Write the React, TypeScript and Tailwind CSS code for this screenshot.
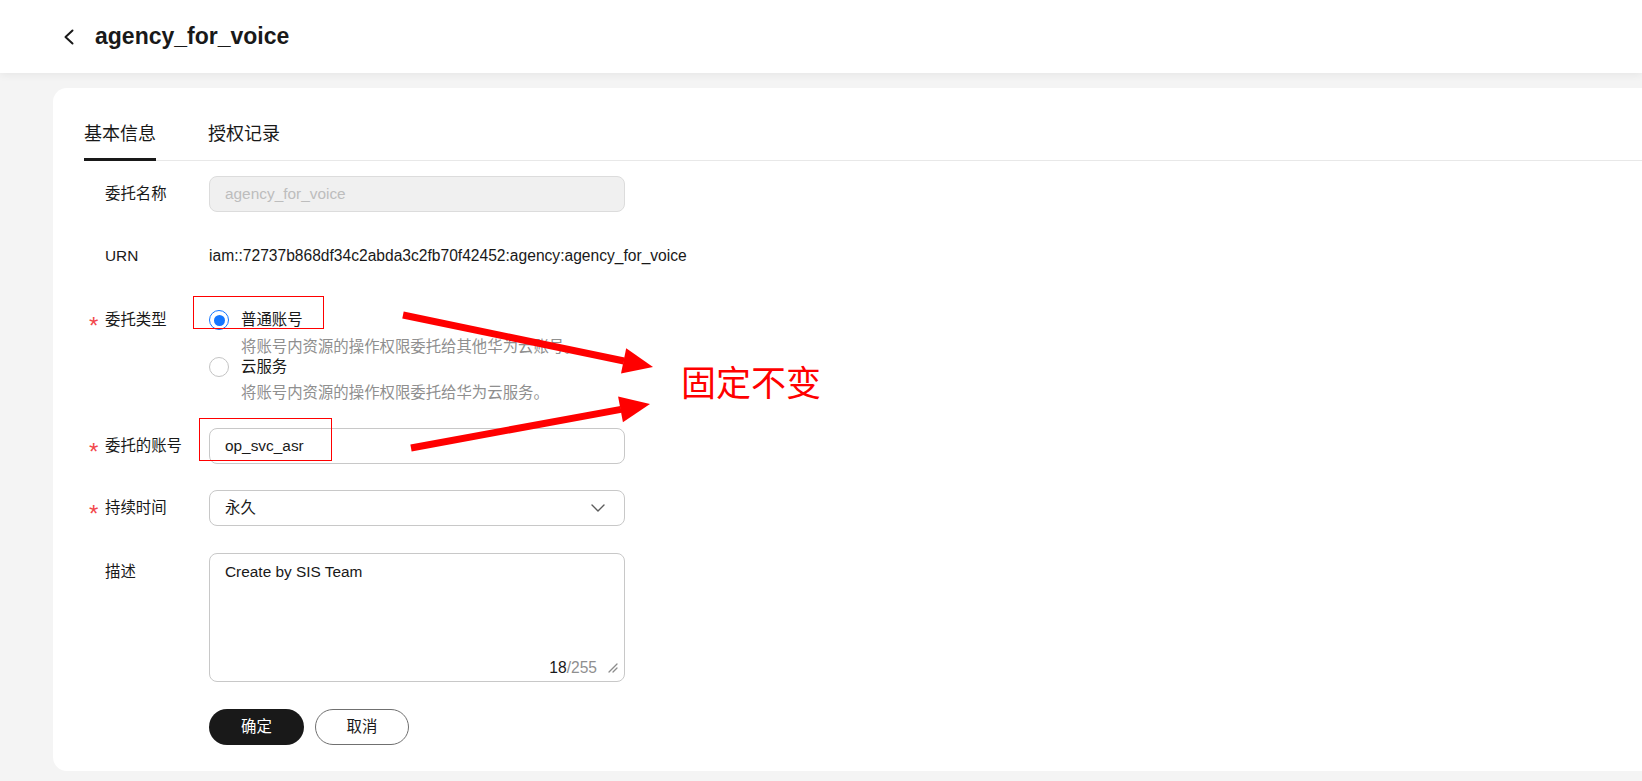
import React from "react";

function Req({ on }: { on?: boolean }) {
  return (
    <span className="relative top-[6px] w-[16px] shrink-0 text-[24px] leading-[20px] text-[#f2474b]">
      {on ? "*" : ""}
    </span>
  );
}

function Label({ text, required, h = "h-[36px]" }: { text: string; required?: boolean; h?: string }) {
  return (
    <div className={`flex w-[156px] shrink-0 items-center pl-[36px] ${h}`}>
      <Req on={required} />
      <span className="text-[15.4px] leading-[20px]">{text}</span>
    </div>
  );
}

function ChevronDown() {
  return (
    <svg width="14" height="8" viewBox="0 0 14 8" fill="none">
      <path d="M1 1 L7 7 L13 1" stroke="#5c5c5c" strokeWidth="1.4" strokeLinecap="round" strokeLinejoin="round" />
    </svg>
  );
}

function ResizeGrip() {
  return (
    <svg width="10" height="10" viewBox="0 0 10 10" fill="none">
      <path d="M1 9 L9 1 M5 9 L9 5" stroke="#8c8c8c" strokeWidth="1.3" strokeLinecap="round" />
    </svg>
  );
}

export default function App() {
  return (
    <div className="relative h-[781px] w-full overflow-hidden bg-[#f4f4f4] font-['Liberation_Sans','Noto_Sans_CJK_SC',sans-serif] text-[#191919]">
      {/* page header */}
      <header className="relative z-10 flex h-[73px] items-center bg-white pl-[62px] shadow-[0_2px_8px_rgba(0,0,0,0.06)]">
        <svg width="12" height="16" viewBox="0 0 12 16" fill="none">
          <path d="M10.5 1.5 L3.5 8 L10.5 14.5" stroke="#191919" strokeWidth="2" strokeLinecap="round" strokeLinejoin="round" />
        </svg>
        <h1 className="ml-[21px] text-[23px] font-bold leading-none">agency_for_voice</h1>
      </header>

      {/* content card */}
      <main className="ml-[53px] mt-[15px] h-[683px] rounded-l-[14px] bg-white">
        {/* tabs */}
        <div className="ml-[31px] flex gap-[52px] border-b border-[#e8e8e8] pt-[33px]">
          <div className="relative pb-[13px] text-[18px] leading-[26px]">
            基本信息
            <span className="absolute bottom-[-1px] left-0 h-[3px] w-full bg-[#191919]" />
          </div>
          <div className="pb-[13px] text-[18px] leading-[26px]">授权记录</div>
        </div>

        {/* form */}
        <div className="flex flex-col">
          {/* agency name */}
          <div className="mt-[15px] flex">
            <Label text="委托名称" />
            <div className="flex h-[36px] w-[416px] items-center rounded-[8px] border border-[#dcdcdc] bg-[#f0f0f0] px-[15px] text-[15.4px] text-[#bdbdbd]">
              agency_for_voice
            </div>
          </div>

          {/* URN */}
          <div className="mt-[26px] flex">
            <Label text="URN" />
            <div className="flex h-[36px] items-center text-[15.6px]">
              iam::72737b868df34c2abda3c2fb70f42452:agency:agency_for_voice
            </div>
          </div>

          {/* agency type */}
          <div className="mt-[36px] flex">
            <Label text="委托类型" required h="h-[20px]" />
            <div className="flex flex-col text-[15.4px] leading-[20px]">
              <div className="flex h-[20px] items-center gap-[12px]">
                <span className="flex h-[20px] w-[20px] items-center justify-center rounded-full border-[1.5px] border-[#1476ff] bg-white">
                  <span className="h-[11px] w-[11px] rounded-full bg-[#1476ff]" />
                </span>
                <span>普通账号</span>
              </div>
              <div className="mt-[7px] pl-[32px] text-[#8f8f8f]">将账号内资源的操作权限委托给其他华为云账号。</div>
              <div className="flex h-[20px] items-center gap-[12px]">
                <span className="h-[20px] w-[20px] rounded-full border border-[#c4c4c4] bg-white" />
                <span>云服务</span>
              </div>
              <div className="mt-[6px] pl-[32px] text-[#8f8f8f]">将账号内资源的操作权限委托给华为云服务。</div>
            </div>
          </div>

          {/* delegated account */}
          <div className="mt-[25px] flex">
            <Label text="委托的账号" required />
            <div className="flex h-[36px] w-[416px] items-center rounded-[8px] border border-[#c8c8c8] bg-white px-[15px] text-[15.4px]">
              op_svc_asr
            </div>
          </div>

          {/* duration */}
          <div className="mt-[26px] flex">
            <Label text="持续时间" required />
            <div className="flex h-[36px] w-[416px] items-center justify-between rounded-[8px] border border-[#c8c8c8] bg-white pl-[15px] pr-[19px] text-[15.4px]">
              <span>永久</span>
              <ChevronDown />
            </div>
          </div>

          {/* description */}
          <div className="mt-[27px] flex">
            <div className="w-[156px] shrink-0 pt-[9px]">
              <Label text="描述" h="h-[20px]" />
            </div>
            <div className="relative h-[129px] w-[416px] rounded-[8px] border border-[#c8c8c8] bg-white px-[15px] pt-[8px] text-[15.4px] leading-[20px]">
              Create by SIS Team
              <div className="absolute bottom-[3px] right-[6px] flex items-center gap-[11px]">
                <span className="text-[15.6px] leading-[20px]">
                  18<span className="text-[#8f8f8f]">/255</span>
                </span>
                <ResizeGrip />
              </div>
            </div>
          </div>

          {/* actions */}
          <div className="mt-[27px] flex gap-[11px] pl-[156px]">
            <button className="h-[36px] w-[95px] rounded-full bg-[#191919] text-[15.4px] text-white">确定</button>
            <button className="h-[36px] w-[94px] rounded-full border border-[#707070] bg-white text-[15.4px] text-[#191919]">取消</button>
          </div>
        </div>
      </main>

      {/* callout marks */}
      <div className="pointer-events-none absolute left-[193px] top-[296px] h-[33px] w-[131px] border border-[#ff0000]" />
      <div className="pointer-events-none absolute left-[199px] top-[418px] h-[43px] w-[133px] border border-[#ff0000]" />
      <svg className="pointer-events-none absolute left-0 top-0" width="1642" height="781" viewBox="0 0 1642 781">
        <line x1="403" y1="315" x2="624" y2="361" stroke="#ff0000" strokeWidth="7" />
        <polygon points="653,367 621,373.6 626.2,348.2" fill="#ff0000" />
        <line x1="411" y1="448" x2="621" y2="409.4" stroke="#ff0000" strokeWidth="7" />
        <polygon points="650,404 622.9,422.2 618.1,396.6" fill="#ff0000" />
      </svg>
      <div className="pointer-events-none absolute left-[681px] top-[363px] font-['Noto_Sans_CJK_SC',sans-serif] text-[35px] leading-[35px] text-[#ff0000]">
        固定不变
      </div>
    </div>
  );
}
